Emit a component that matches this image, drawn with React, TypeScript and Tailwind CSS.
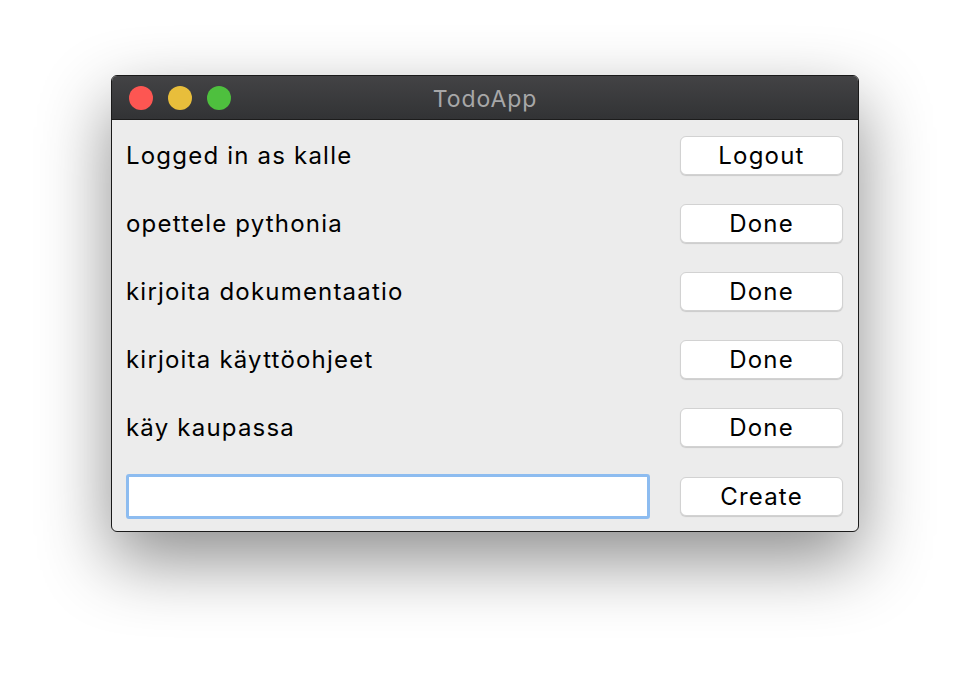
import React from "react";

const items = ["opettele pythonia", "kirjoita dokumentaatio", "kirjoita käyttöohjeet", "käy kaupassa"];

function Btn({ label }: { label: string }) {
  return (
    <button className="w-[163px] h-[39px] bg-white rounded-[6px] border border-[#d2d2d2] shadow-[0_1px_1px_rgba(0,0,0,0.14)] text-[24px] tracking-[0.05em] text-black leading-none flex items-center justify-center">
      {label}
    </button>
  );
}

export default function App() {
  return (
    <div className="w-[970px] h-[680px] bg-white pl-[111px] pt-[75px]" style={{ fontFamily: "Inter, 'Noto Sans', sans-serif" }}>
      <div className="w-[748px] h-[457px] rounded-[6px] border border-[#1a1a1a] overflow-hidden flex flex-col bg-[#ececec] shadow-[0_28px_70px_rgba(0,0,0,0.45)]">
        <div className="h-[44px] shrink-0 bg-gradient-to-b from-[#434345] to-[#323335] border-b border-[#1c1c1c] relative flex items-center px-[17px] gap-[15px]">
          <div className="w-[24px] h-[24px] rounded-full bg-[#fd5652]" />
          <div className="w-[24px] h-[24px] rounded-full bg-[#e8be3b]" />
          <div className="w-[24px] h-[24px] rounded-full bg-[#4ec03e]" />
          <div className="absolute inset-0 pt-[3px] flex items-center justify-center text-[23px] tracking-[0.04em] text-[#a7a7a8] pointer-events-none">TodoApp</div>
        </div>
        <div className="flex flex-col pl-[14px] pr-[15px] pt-[16px] gap-[29px]">
          <div className="flex items-center justify-between h-[39px]">
            <span className="text-[24px] tracking-[0.05em] text-black">Logged in as kalle</span>
            <Btn label="Logout" />
          </div>
          {items.map((t) => (
            <div key={t} className="flex items-center justify-between h-[39px]">
              <span className="text-[24px] tracking-[0.05em] text-black">{t}</span>
              <Btn label="Done" />
            </div>
          ))}
          <div className="flex items-center justify-between h-[45px] -mt-[2px]">
            <input className="w-[524px] h-[45px] bg-white border-[3px] border-[#8dbcf0] rounded-[3px] outline-none" />
            <Btn label="Create" />
          </div>
        </div>
      </div>
    </div>
  );
}
